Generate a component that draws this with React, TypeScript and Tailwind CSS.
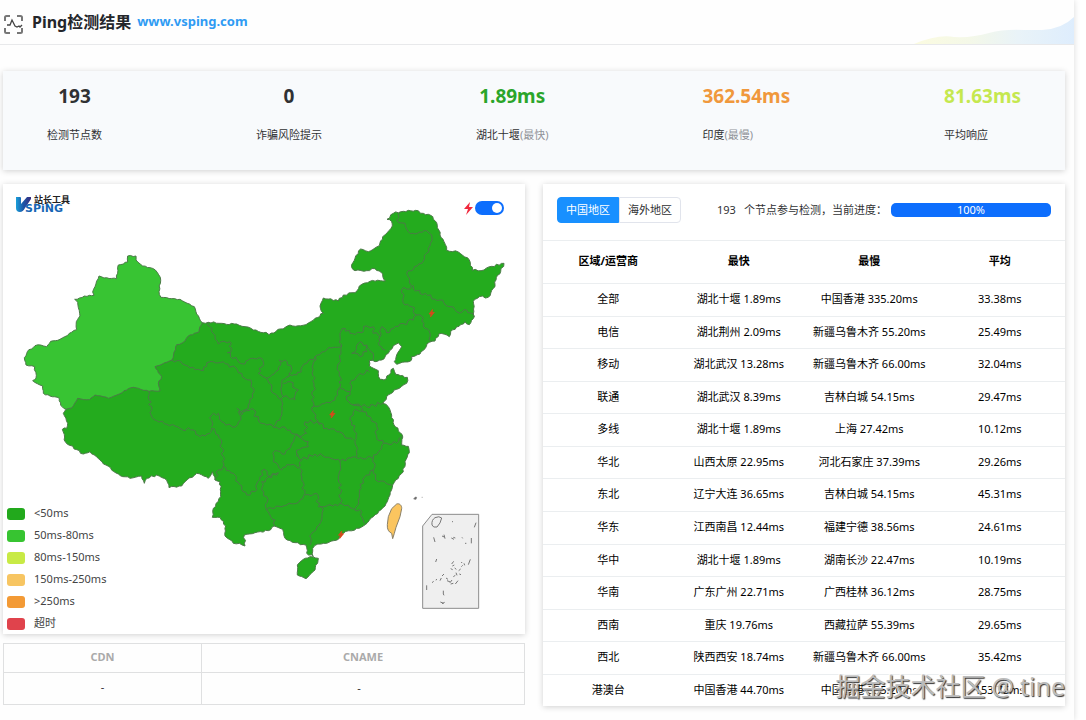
import { useState } from "react";
import { clsx } from "clsx";

type Point = [number, number];

const toPoints = (text: string): Point[] => {
  const nums = text.trim().split(/[\s,]+/).map(Number);
  const points: Point[] = [];
  for (let i = 0; i < nums.length; i += 2) points.push([nums[i], nums[i + 1]]);
  return points;
};

// Breaks long segments into small irregular steps, like a real coast line
const rough = (text: string, amount = 4, close = false) => {
  const points = toPoints(text);
  if (close) points.push(points[0]);
  let seed = points[0][0] * 7 + points[0][1] * 13;
  const next = () => {
    seed = (seed * 1103515245 + 12345) % 2147483648;
    return seed / 2147483648 - 0.5;
  };
  let d = `M${points[0][0]} ${points[0][1]}`;
  for (let i = 1; i < points.length; i++) {
    const [x1, y1] = points[i - 1];
    const [x2, y2] = points[i];
    const length = Math.hypot(x2 - x1, y2 - y1);
    const steps = Math.max(1, Math.round(length / 8));
    for (let s = 1; s < steps; s++) {
      const t = s / steps;
      const off = next() * amount * 2;
      const x = x1 + (x2 - x1) * t - ((y2 - y1) / length) * off;
      const y = y1 + (y2 - y1) * t + ((x2 - x1) / length) * off;
      d += `L${x.toFixed(1)} ${y.toFixed(1)}`;
    }
    d += `L${x2} ${y2}`;
  }
  return close ? d + "Z" : d;
};

const XINJIANG =
  "383,768 408,768 408,780 428,798 450,803 466,810 481,832 477,875 483,892 540,898 583,920 590,942 607,968 600,980 597,996 570,1005 548,1028 530,1034 516,1080 465,1100 485,1130 475,1150 480,1173 447,1174 400,1162 372,1172 358,1182 325,1195 285,1185 268,1199 233,1195 215,1224 198,1228 182,1216 178,1195 150,1188 130,1180 128,1158 98,1142 108,1135 104,1100 78,1095 73,1073 82,1055 105,1037 122,1035 140,1040 152,1024 180,1018 230,989 229,965 240,948 233,907 224,898 268,886 282,886 278,876 297,828 312,834 350,836 355,795 383,786";

const MAINLAND =
  "607,968 625,967 665,970 710,972 735,980 760,990 798,997 807,1004 862,978 918,974 945,955 970,940 960,918 970,894 1015,903 1030,885 1065,878 1078,858 1110,844 1156,843 1148,822 1125,806 1100,812 1065,812 1055,802 1065,775 1082,747 1105,755 1138,737 1148,710 1177,678 1175,665 1161,658 1180,640 1210,634 1247,631 1270,640 1292,646 1310,668 1320,705 1332,725 1340,751 1375,756 1408,780 1417,811 1452,810 1475,799 1512,790 1502,815 1488,840 1485,860 1465,892 1438,890 1420,904 1423,950 1408,974 1395,965 1352,995 1348,1010 1317,1001 1305,1023 1288,1027 1260,1062 1235,1070 1232,1083 1190,1093 1183,1085 1190,1065 1205,1040 1195,1029 1180,1037 1165,1060 1145,1080 1125,1085 1108,1082 1108,1098 1135,1112 1140,1138 1152,1140 1180,1105 1187,1123 1222,1132 1220,1150 1190,1168 1160,1190 1148,1210 1165,1220 1175,1245 1182,1275 1206,1303 1205,1335 1225,1339 1228,1358 1215,1385 1210,1415 1178,1455 1170,1485 1155,1518 1120,1550 1097,1573 1070,1585 1030,1600 1015,1618 980,1630 945,1636 938,1645 940,1670 920,1660 918,1635 885,1628 855,1615 848,1588 822,1578 805,1592 765,1598 733,1605 735,1638 718,1630 700,1630 675,1608 677,1578 660,1552 637,1552 640,1525 662,1490 660,1445 645,1440 638,1415 625,1435 590,1420 555,1445 545,1458 507,1463 500,1440 470,1425 440,1435 433,1450 425,1428 390,1435 355,1422 318,1395 270,1355 250,1362 197,1327 187,1288 200,1285 203,1270 190,1240 198,1228 215,1205 300,1150 400,1120 460,1050 590,960";

const HAINAN = "930,1670 955,1675 945,1710 918,1736 892,1725 892,1695 910,1678";
const TAIWAN =
  "M1190 1512C1198 1509 1206 1516 1205 1526L1200 1550L1188 1582L1183 1600L1178 1616L1175 1600C1166 1596 1161 1588 1162 1574L1165 1550L1175 1526Z";

const BORDERS = [
  "625,967 640,1000 655,1032 690,1025 695,1045 682,1058 712,1080 735,1092 745,1080 785,1075 790,1085 775,1120 790,1130 800,1135 815,1155 820,1180 842,1198",
  "516,1080 555,1095 610,1112 630,1085 670,1085 712,1110 755,1150 762,1175 745,1215 735,1230",
  "735,1230 715,1235 722,1260 700,1282 665,1265 655,1240 635,1245 635,1280",
  "447,1174 453,1245 470,1262 540,1285 580,1290 600,1310 628,1300 635,1285 655,1305 665,1330 670,1400 655,1410 645,1440",
  "670,1400 700,1420 740,1485 765,1475 780,1430 793,1408 810,1430 835,1418",
  "710,1225 725,1245 740,1232 755,1225 775,1260 800,1275 830,1282 870,1290 925,1325 925,1340 890,1350 890,1370",
  "885,1310 870,1345 855,1362 825,1352 820,1385 845,1410 870,1395 895,1405 905,1380 890,1360",
  "835,1418 785,1445 785,1470 800,1490 800,1530 860,1515 900,1500 915,1480 905,1440 900,1405",
  "800,1530 812,1550 825,1560 825,1578",
  "915,1485 950,1480 955,1520 970,1530 965,1560 935,1600 930,1635",
  "905,1380 945,1362 1000,1378 1020,1385 1015,1430 1022,1480 1020,1510 960,1520",
  "1020,1385 1060,1370 1120,1375 1120,1410 1088,1440 1075,1500 1065,1530 1020,1510",
  "1065,1530 1085,1535 1090,1560 1097,1573",
  "1120,1410 1135,1445 1175,1455",
  "1120,1375 1145,1345 1150,1330 1190,1330 1205,1310",
  "1060,1215 1085,1225 1110,1250 1130,1280 1130,1310 1150,1330",
  "1090,1228 1060,1235 1050,1260 1070,1300 1065,1330 1070,1370",
  "915,1265 950,1265 980,1285 1010,1295 1060,1320",
  "935,1225 945,1255 960,1275",
  "915,1265 920,1300 885,1310",
  "945,1070 940,1110 942,1150 935,1225 1005,1200 1015,1168 1025,1140 1012,1100 1023,1060 1025,1035 980,1050 945,1070",
  "945,1070 920,1090 890,1125 868,1120 875,1105 855,1080 838,1080 835,1110 800,1135",
  "868,1120 845,1150 850,1190 885,1200 895,1170 870,1145 850,1150",
  "850,1190 845,1220 840,1260 822,1280",
  "1025,1035 1020,1000 1035,985 1050,1000 1080,998 1100,978 1120,980 1120,1000 1140,1010 1145,980 1160,998 1180,985 1240,960 1250,945",
  "1250,945 1270,955 1275,985 1290,1000 1292,1025",
  "1250,945 1235,920 1215,915 1205,870 1235,860 1240,855",
  "1240,858 1260,880 1320,900 1350,920 1370,935 1400,930 1422,950",
  "1235,860 1225,830 1220,820 1265,790 1285,745 1295,705 1280,692 1245,702 1225,695 1215,670 1190,660 1200,635",
  "1140,1010 1135,1030 1155,1050",
  "1055,1060 1080,1025 1100,1035 1100,1055 1080,1070 1055,1060",
  "1100,1035 1120,1060 1115,1083",
  "1108,1115 1080,1120 1050,1150 1050,1175 1015,1168",
  "1050,1175 1040,1200 1060,1215 1100,1220 1120,1215 1148,1210",
];

const ISLANDS =
  "M1423 1582l5-14M1301 1612l4 14M1414 1630v-16M1307 1686l3-9M1405 1694l6-16M1280 1770v-14M1330 1772v10l2 4M1321 1806l10 4M1326 1811l8-4M1326 1608l7 3M1332 1604l3 12M1354 1614l8 4M1360 1612l6 2M1356 1564l3 2M1355 1692l6-8M1357 1698l6-3M1296 1748l5-4M1308 1741l2-4M1320 1742l4-8M1326 1728l6-6M1341 1742l10 4M1350 1748l6-8M1352 1752l8-2M1366 1752l8-10M1338 1734l6 4M1360 1730l6-4M1368 1718l3 8M1376 1712l6-5M1384 1700l4-4M1352 1706l6 3M1364 1704l5 4M1378 1722l5 2M1392 1690l2 6M1384 1686l2 3M1386 1612l2 3M1395 1630h4";

const Bolt = ({ x, y, size }: { x: number; y: number; size: number }) => (
  <svg x={x} y={y} width={size} height={size} viewBox="0 0 24 24">
    <path d="M15 0 4 14h6l-2 10 12-15h-7z" fill="#d9481c" stroke="#d9481c" strokeWidth="2" />
  </svg>
);

const ChinaMap = () => (
  <svg viewBox="9 552 1566 1350" className="block w-full" role="img" aria-label="中国地区">
    <g stroke="#4c7a48" strokeWidth="3" strokeLinejoin="round">
      <path d={rough(MAINLAND, 3, true)} fill="#24ab1e" />
      <path d={rough(XINJIANG, 2, true)} fill="#38c433" />
      <path d={rough(HAINAN, 2, true)} fill="#24ab1e" />
      <path d={TAIWAN} fill="#fbc55f" stroke="#8a8069" />
      {BORDERS.map((border) => (
        <path key={border} d={rough(border, 6)} fill="none" />
      ))}
    </g>
    <path d="M1241 1497l5-6 4 1-2 6zM1265 1492h3" fill="#666" stroke="#777" strokeWidth="2" />
    <path d="M1296 1543H1436V1825H1268V1578Z" fill="#efefef" stroke="#8c8c8c" strokeWidth="3" />
    <path
      d="M1296 1575Q1294 1560 1305 1553Q1318 1547 1325 1554Q1322 1570 1311 1581Q1299 1584 1296 1575Z"
      fill="none"
      stroke="#777"
      strokeWidth="3"
    />
    <path d={ISLANDS} fill="none" stroke="#777" strokeWidth="3" />
    <Bolt x={1283} y={928} size={24} />
    <Bolt x={985} y={1231} size={24} />
    <Bolt x={1011} y={1592} size={24} />
  </svg>
);

const Logo = () => (
  <svg width="60" height="24" viewBox="0 -4 60 24" className="absolute left-3 top-2">
    <defs>
      <linearGradient id="mark" x1="0" y1="0" x2="1" y2="0">
        <stop offset="0" stopColor="#1a9fd9" />
        <stop offset="0.5" stopColor="#1c55a8" />
        <stop offset="1" stopColor="#3a2b7c" />
      </linearGradient>
    </defs>
    <path d="M1 1h4q1 0 1 1v6l6-7h4v2l-6 9q-2 4-5 4-4 0-4-4z" fill="url(#mark)" />
    <text x="19" y="7" fontSize="9" fontWeight="700" fill="#222" fontFamily="Noto Sans CJK SC">
      站长工具
    </text>
    <text x="10" y="16" fontSize="11" fontWeight="700" fill="#1766b4" fontFamily="DejaVu Sans">
      SPiNG
    </text>
  </svg>
);

const legend = [
  { label: "<50ms", color: "bg-[#22a91c]" },
  { label: "50ms-80ms", color: "bg-[#37c431]" },
  { label: "80ms-150ms", color: "bg-[#c8ea45]" },
  { label: "150ms-250ms", color: "bg-[#f7c562]" },
  { label: ">250ms", color: "bg-[#f39a35]" },
  { label: "超时", color: "bg-[#e0434c]" },
];

const stats = [
  { value: "193", label: "检测节点数", color: "text-[#303133]", align: "items-center" },
  { value: "0", label: "诈骗风险提示", color: "text-[#303133]", align: "items-center" },
  { value: "1.89ms", label: "湖北十堰", note: "(最快)", color: "text-[#2aa52a]", align: "items-center" },
  { value: "362.54ms", label: "印度", note: "(最慢)", color: "text-[#f0983c]", align: "items-start" },
  { value: "81.63ms", label: "平均响应", color: "text-[#c5e84f]", align: "items-start" },
];

const rows = [
  ["全部", "湖北十堰 1.89ms", "中国香港 335.20ms", "33.38ms"],
  ["电信", "湖北荆州 2.09ms", "新疆乌鲁木齐 55.20ms", "25.49ms"],
  ["移动", "湖北武汉 13.28ms", "新疆乌鲁木齐 66.00ms", "32.04ms"],
  ["联通", "湖北武汉 8.39ms", "吉林白城 54.15ms", "29.47ms"],
  ["多线", "湖北十堰 1.89ms", "上海 27.42ms", "10.12ms"],
  ["华北", "山西太原 22.95ms", "河北石家庄 37.39ms", "29.26ms"],
  ["东北", "辽宁大连 36.65ms", "吉林白城 54.15ms", "45.31ms"],
  ["华东", "江西南昌 12.44ms", "福建宁德 38.56ms", "24.61ms"],
  ["华中", "湖北十堰 1.89ms", "湖南长沙 22.47ms", "10.19ms"],
  ["华南", "广东广州 22.71ms", "广西桂林 36.12ms", "28.75ms"],
  ["西南", "重庆 19.76ms", "西藏拉萨 55.39ms", "29.65ms"],
  ["西北", "陕西西安 18.74ms", "新疆乌鲁木齐 66.00ms", "35.42ms"],
  ["港澳台", "中国香港 44.70ms", "中国香港 335.20ms", "153.75ms"],
];

const Header = () => (
  <header className="relative flex h-[45px] items-center border-b border-[#e8e9eb] pl-1">
    <svg width="19" height="19" viewBox="0 0 19 19" fill="none" stroke="#777" strokeWidth="2" className="mt-1">
      <path d="M1 6V2.500Q1 1 2.500 1H6M13 1h3.500Q18 1 18 2.500V6M18 13v3.500Q18 18 16.500 18H13M6 18H2.500Q1 18 1 16.500V13" />
      <path d="M3 10h3l2-5 3 6 2 1 2-1 1 1 2-2" stroke="#444" strokeWidth="1.300" />
    </svg>
    <h1 className="ml-[9px] text-base font-bold text-[#24262b]">Ping检测结果</h1>
    <a href="#vsping" className="ml-1.5 text-[13px] font-bold text-[#2f9bf3]">
      www.vsping.com
    </a>
    <svg width="160" height="27" viewBox="0 0 160 27" className="absolute bottom-0 right-0">
      <defs>
        <linearGradient id="wave" x1="0" y1="0" x2="1" y2="0">
          <stop offset="0" stopColor="#fbfbe0" />
          <stop offset="0.350" stopColor="#f4f8e8" />
          <stop offset="0.650" stopColor="#e9f3f8" />
          <stop offset="1" stopColor="#deedfd" />
        </linearGradient>
      </defs>
      <path d="M0 27Q24 17 40 20Q58 21 75 16Q90 12 110 13H128Q148 12 160 0V27Z" fill="url(#wave)" />
    </svg>
  </header>
);

const RegionTable = () => (
  <table className="h-[466px] w-full table-fixed border-collapse text-center text-[11px] text-black">
    <thead>
      <tr className="h-[43px] border-y border-[#ebeef0]">
        {["区域/运营商", "最快", "最慢", "平均"].map((title) => (
          <th key={title} className="pb-0.5 font-bold">
            {title}
          </th>
        ))}
      </tr>
    </thead>
    <tbody>
      {rows.map((row) => (
        <tr key={row[0]} className="border-b border-[#ebeef0] last:border-b-0">
          {row.map((cell, i) => (
            <td key={i} className="pb-px">
              {cell}
            </td>
          ))}
        </tr>
      ))}
    </tbody>
  </table>
);

export default function App() {
  const [showBolts, setShowBolts] = useState(true);
  const [region, setRegion] = useState("中国地区");

  return (
    <div className="min-h-screen bg-white pr-3 font-['Noto_Sans','Noto_Sans_CJK_SC',sans-serif] text-[#303133]">
      <div className="min-h-screen bg-[#fefefe] shadow-[0_0_6px_rgba(0,0,0,0.15)]">
        <Header />

        <main className="pb-3 pl-[3px] pr-[9px] pt-[26px]">
          {/* Stats */}
          <section className="flex h-[99px] justify-between bg-[#f8fafc] px-11 pt-[11px] shadow-[0_1px_6px_rgba(0,0,0,0.18)]">
            {stats.map((stat) => (
              <div key={stat.label} className={clsx("flex flex-col gap-[17px]", stat.align)}>
                <strong className={clsx("text-[19px] leading-7 font-bold", stat.color)}>{stat.value}</strong>
                <span className="text-[11px] leading-4">
                  {stat.label}
                  {stat.note && <span className="text-[#909399]">{stat.note}</span>}
                </span>
              </div>
            ))}
          </section>

          <div className="mt-3.5 grid grid-cols-2 items-start gap-[18px]">
            <div className="flex flex-col gap-[9px]">
              {/* Map */}
              <section className="relative bg-white shadow-[0_1px_6px_rgba(0,0,0,0.18)]">
                <ChinaMap />
                <Logo />
                <label className="absolute right-[21px] top-[17px] flex items-center gap-0.5">
                  <svg width="9" height="13" viewBox="0 0 9 13" aria-hidden="true">
                    <path d="M6 0 0 7h4l-2 6 7-8H5z" fill="#f0283c" />
                  </svg>
                  <input
                    type="checkbox"
                    role="switch"
                    aria-label="显示闪电"
                    checked={showBolts}
                    onChange={() => setShowBolts(!showBolts)}
                    className="h-3.5 w-[29px] appearance-none rounded-full bg-gray-300 p-0.5 before:block before:size-2.5 before:rounded-full before:bg-white checked:bg-[#0d6efd] checked:before:ml-auto"
                  />
                </label>
                <ul className="absolute bottom-0.5 left-1 flex flex-col gap-[5px] text-[11px] text-[#444]">
                  {legend.map((item) => (
                    <li key={item.label} className="flex h-[17px] items-center gap-[9px]">
                      <span className={clsx("h-3 w-[18px] rounded-[3px]", item.color)} />
                      {item.label}
                    </li>
                  ))}
                </ul>
              </section>

              <table className="w-full table-fixed border-collapse text-center text-[11px]">
                <thead>
                  <tr className="h-[29px] text-[#aaa]">
                    <th className="w-[38%] border border-[#dfe0e1] pb-0.5 font-bold">CDN</th>
                    <th className="border border-[#dfe0e1] pb-0.5 font-bold">CNAME</th>
                  </tr>
                </thead>
                <tbody>
                  <tr className="h-8">
                    <td className="border border-[#dfe0e1] pb-0.5">-</td>
                    <td className="border border-[#dfe0e1] pr-2">-</td>
                  </tr>
                </tbody>
              </table>
            </div>

            {/* Results by region */}
            <section className="relative bg-white shadow-[0_1px_6px_rgba(0,0,0,0.18)]">
              <div className="flex h-14 items-center px-3.5 text-[11px]">
                <div className="-mt-1 flex h-[26px] shrink-0">
                  {["中国地区", "海外地区"].map((name) => (
                    <button
                      key={name}
                      onClick={() => setRegion(name)}
                      className={clsx(
                        "w-[62px] border first:rounded-l last:rounded-r",
                        region === name
                          ? "border-[#1890ff] bg-[#1890ff] text-white"
                          : "border-[#e1e4ec] bg-white"
                      )}
                    >
                      {name}
                    </button>
                  ))}
                </div>
                <p className="-mt-1 ml-9 shrink-0">
                  <span className="mr-2">193</span>
                  个节点参与检测，当前进度：
                </p>
                <div className="-mt-1 ml-1 h-3.5 flex-1 rounded-[5px] bg-[#0d6efd] text-center leading-[14px] text-white">
                  100%
                </div>
              </div>
              <RegionTable />
              <p className="absolute bottom-0 right-0 flex gap-1.5 whitespace-nowrap text-[25px] leading-10 text-[#bbb] [text-shadow:1px_1px_1px_#333,-1px_-1px_1px_#fff]">
                <span>掘金技术社区</span>
                <span>@</span>
                <span>tine</span>
              </p>
            </section>
          </div>
        </main>
      </div>
    </div>
  );
}
